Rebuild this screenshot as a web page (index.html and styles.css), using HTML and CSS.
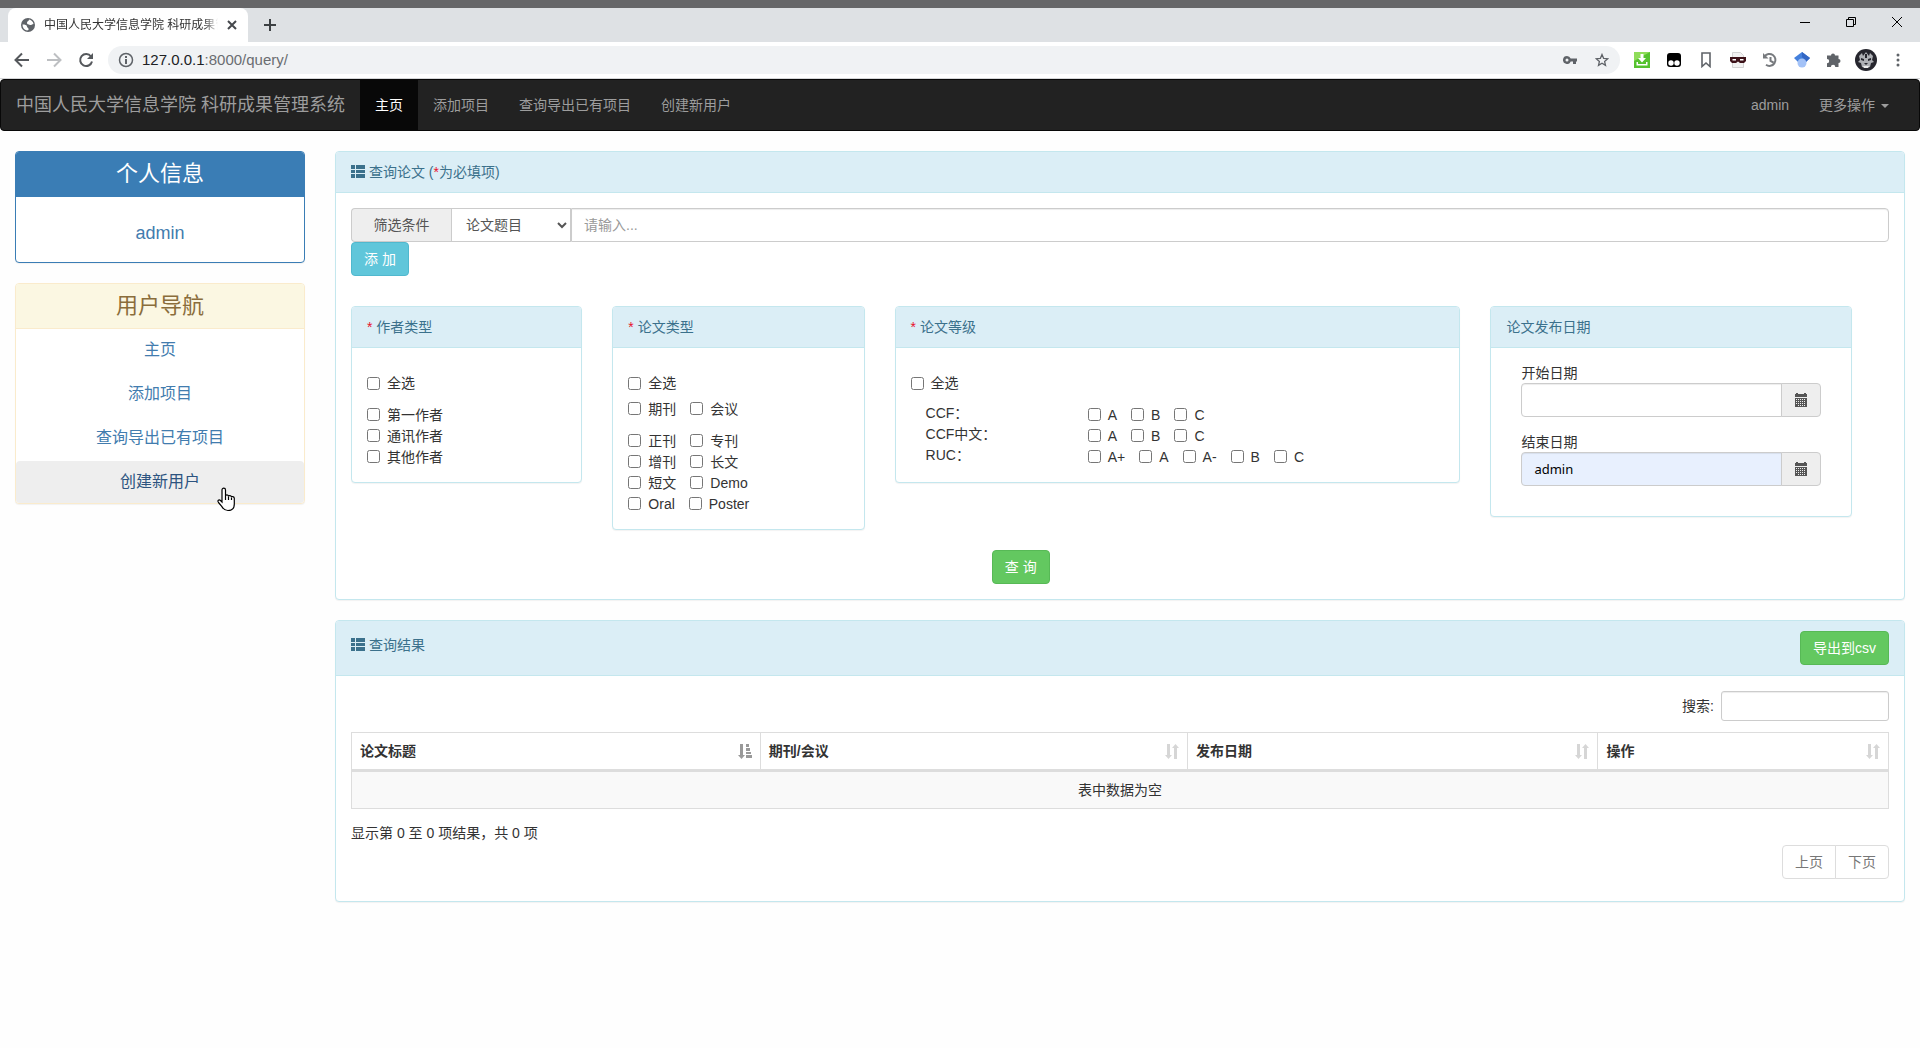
FILE: index.html
```html
<!DOCTYPE html>
<html lang="zh-CN">
<head>
<meta charset="utf-8">
<meta name="viewport" content="width=device-width, initial-scale=1">
<title>中国人民大学信息学院 科研成果管理系统</title>
<link rel="stylesheet" href="styles.css">
</head>
<body>
<svg class="sprite" aria-hidden="true">
  <symbol id="i-list" viewBox="0 0 14 13"><path d="M0 0h4v4H0zM5 0h9v4H5zM0 5h4v3H0zM5 5h9v3H5zM0 9h4v4H0zM5 9h9v4H5z"/></symbol>
  <symbol id="i-cal" viewBox="0 0 14 14"><path fill-rule="evenodd" d="M1 1h1V0h2v1h6V0h2v1h1v3H1zM1 5h12v9H1zM2 6v1h1V6zM4 6v1h1V6zM6 6v1h1V6zM8 6v1h1V6zM10 6v1h1V6zM2 8v1h1V8zM4 8v1h1V8zM6 8v1h1V8zM8 8v1h1V8zM10 8v1h1V8zM2 10v1h1v-1zM4 10v1h1v-1zM6 10v1h1v-1zM8 10v1h1v-1zM10 10v1h1v-1zM4 12v1h1v-1zM6 12v1h1v-1zM8 12v1h1v-1zM10 12v1h1v-1z"/></symbol>
  <symbol id="i-sort" viewBox="0 0 14 15"><path d="M2 0h3v11h2l-3.500 4L0 11h2zM9 15h3V4h2L10.500 0 7 4h2z"/></symbol>
  <symbol id="i-sort-asc" viewBox="0 0 14 15"><path d="M2 0h3v11h2l-3.500 4L0 11h2zM8 0h3v3H8zM8 4h4v3H8zM8 8h5v2H8zM8 11h6v3H8z"/></symbol>
</svg>

<header class="browser">
  <div class="desktop-strip"></div>
  <div class="tabs">
    <div class="tab">
      <svg width="14" height="14" viewBox="0 0 14 14"><circle cx="7" cy="7" r="7" fill="#5f6368"/><path d="M1.500 6.500c2.500 0 4.500.5 4.500 2s2 1 1.500 3.500l-1.500.5C3 12 1.500 9.500 1.500 6.500zM8 1.500c2 .5 4.200 2 4.500 4.500-1.500 0-2 1.500-3.500 1C7.500 6.500 5.500 6 6 4.500S8 3 8 1.500z" fill="#fff"/></svg>
      <span class="tab-title">中国人民大学信息学院 科研成果管理系统</span>
      <button class="plain" aria-label="关闭标签页"><svg width="10" height="10" viewBox="0 0 10 10"><path d="M1 1l8 8M9 1L1 9" stroke="#45484c" stroke-width="2"/></svg></button>
    </div>
    <button class="plain new-tab" aria-label="新标签页"><svg width="12" height="12" viewBox="0 0 12 12"><path d="M6 0v12M0 6h12" stroke="#3c4043" stroke-width="2"/></svg></button>
    <div class="window-controls">
      <button class="plain" aria-label="最小化"><svg width="10" height="10" viewBox="0 0 10 10"><path d="M0 5.500h10" stroke="#000"/></svg></button>
      <button class="plain" aria-label="还原"><svg width="10" height="10" viewBox="0 0 10 10" fill="none" stroke="#000"><path d="M.5 2.500h7v7h-7zM2.500 2.500v-2h7v7h-2"/></svg></button>
      <button class="plain" aria-label="关闭"><svg width="10" height="10" viewBox="0 0 10 10"><path d="M0 0l10 10M10 0L0 10" stroke="#000"/></svg></button>
    </div>
  </div>
  <div class="toolbar">
    <button class="plain tool" aria-label="后退"><svg width="16" height="16" viewBox="0 0 16 16" fill="none" stroke="#55585c" stroke-width="2"><path d="M15 8H2M8 1.500L1.500 8 8 14.500"/></svg></button>
    <button class="plain tool" aria-label="前进"><svg width="16" height="16" viewBox="0 0 16 16" fill="none" stroke="#bdbfc2" stroke-width="2"><path d="M1 8h13M8 1.500L14.500 8 8 14.500"/></svg></button>
    <button class="plain tool" aria-label="重新加载"><svg width="16" height="16" viewBox="0 0 16 16"><path d="M13 4.500A6 6 0 1 0 14 9.500" fill="none" stroke="#55585c" stroke-width="2"/><path d="M15 1v6H9z" fill="#55585c"/></svg></button>
    <div class="omnibox">
      <svg width="16" height="16" viewBox="0 0 16 16"><circle cx="8" cy="8" r="6.500" fill="none" stroke="#5f6368" stroke-width="1.500"/><path d="M7 7h2v5H7zM7 4h2v2H7z" fill="#5f6368"/></svg>
      <span class="url">127.0.0.1<span class="url-rest">:8000/query/</span></span>
      <button class="plain tool" aria-label="密码"><svg width="14" height="8" viewBox="0 0 14 8"><path fill-rule="evenodd" fill="#5f6368" d="M4 0a4 4 0 1 0 3.700 5.500H10V8h3V5.500h1v-3H7.700A4 4 0 0 0 4 0zM4 2.500a1.500 1.500 0 1 1 0 3 1.500 1.500 0 0 1 0-3z"/></svg></button>
      <button class="plain tool" aria-label="收藏"><svg width="14" height="14" viewBox="0 0 14 14"><path d="M7 1.500l1.600 3.800 4.100.4-3.100 2.700.9 4L7 10.300l-3.500 2.100.9-4-3.100-2.700 4.100-.4z" fill="none" stroke="#5f6368" stroke-width="1.300"/></svg></button>
    </div>
    <div class="extensions">
      <button class="plain tool" aria-label="下载"><svg width="16" height="16" viewBox="0 0 16 16"><rect width="16" height="16" fill="#55c22f"/><path d="M0 0h16L0 9z" fill="#8fdc5a"/><path d="M6.500 2h3v4H12L8 10.500 4 6h2.500zM2.500 10H4v2h8v-2h1.500v3.500h-11z" fill="#fff"/></svg></button>
      <button class="plain tool" aria-label="脚本管理"><svg width="14" height="14" viewBox="0 0 14 14"><rect width="14" height="14" rx="3" fill="#000"/><circle cx="4" cy="10" r="2.700" fill="#fff"/><circle cx="10" cy="10" r="2.700" fill="#fff"/></svg></button>
      <button class="plain tool" aria-label="书签"><svg width="10" height="16" viewBox="0 0 10 16"><path d="M1 1h8v13.500L5 11l-4 3.500z" fill="none" stroke="#5f6368" stroke-width="1.600"/></svg></button>
      <button class="plain tool" aria-label="面具"><svg width="16" height="16" viewBox="0 0 16 16"><path d="M2.500.5h8l3 3v12h-11z" fill="#f2f2f2" stroke="#d4d4d4"/><path d="M0 5h16v4l-2 2h-4L8 9.500 6 11H2L0 9z" fill="#3d1219"/><path d="M2.500 7h3.500v1.500H2.500zM10 7h3.500v1.500H10z" fill="#fff"/></svg></button>
      <button class="plain tool" aria-label="历史"><svg width="16" height="16" viewBox="0 0 16 16" fill="none" stroke="#777a7e" stroke-width="2"><path d="M2.500 4.500A6 6 0 1 1 4 12.800M8.500 5v4l3 1.500"/><path d="M1 1v5.500h5.500z" fill="#777a7e" stroke="none"/></svg></button>
      <button class="plain tool" aria-label="学术"><svg width="16" height="16" viewBox="0 0 16 16"><path d="M8 0l8 6-4 4H4L0 6z" fill="#4480dc"/><path d="M8 0l8 6-4 4-4-5z" fill="#3367c4"/><circle cx="8" cy="11" r="4.500" fill="#a3c2f7"/></svg></button>
      <button class="plain tool" aria-label="扩展程序"><svg width="16" height="16" viewBox="0 0 16 16"><path d="M5 3.500a2 2 0 0 1 4 0h3.500V7a2 2 0 0 1 0 4v4H9.300a2.200 2.200 0 0 0-4.400 0H1v-3.700a2.200 2.200 0 0 0 0-4.400V3.500z" fill="#5f6368"/></svg></button>
      <button class="plain tool" aria-label="用户"><svg width="22" height="22" viewBox="0 0 22 22"><circle cx="11" cy="11" r="11" fill="#26262e"/><path d="M4 7l3-3 1 3 3-4 3 4 1-3 3 3-1 4 2 2-3 1-1 4-4 1-4-1-1-4-3-1 2-2z" fill="#aeb0b5"/><path d="M6 9l3 1v2L6 11zM16 9l-3 1v2l3-1zM9 14h4l-2 2zM10 5h2v4h-2z" fill="#26262e"/><path d="M8 17h6l-1 2H9z" fill="#eee"/></svg></button>
      <button class="plain tool" aria-label="菜单"><svg width="4" height="14" viewBox="0 0 4 14" fill="#5f6368"><circle cx="2" cy="2" r="1.500"/><circle cx="2" cy="7" r="1.500"/><circle cx="2" cy="12" r="1.500"/></svg></button>
    </div>
  </div>
</header>

<nav class="navbar">
  <a class="brand" href="#">中国人民大学信息学院 科研成果管理系统</a>
  <a class="nav-link active" href="#">主页</a>
  <a class="nav-link" href="#">添加项目</a>
  <a class="nav-link" href="#">查询导出已有项目</a>
  <a class="nav-link" href="#">创建新用户</a>
  <div class="nav-right">
    <a class="nav-link" href="#">admin</a>
    <a class="nav-link" href="#">更多操作 <span class="caret"></span></a>
  </div>
</nav>

<div class="layout">
  <aside class="sidebar">
    <section class="panel primary">
      <h2 class="side-heading">个人信息</h2>
      <div class="profile"><a href="#">admin</a></div>
    </section>
    <section class="panel warning">
      <h2 class="side-heading">用户导航</h2>
      <div class="side-nav">
        <a href="#">主页</a>
        <a href="#">添加项目</a>
        <a href="#">查询导出已有项目</a>
        <a class="hovered" href="#">创建新用户
          <svg class="cursor" width="19" height="25" viewBox="0 0 19 25"><path d="M5 15V3c0-2.500 3.500-2.500 3.500 0v6c0-1.500 3-1.500 3 .5 0-1.500 3-1.200 3 .8 0-1.300 2.800-1 2.800 1V17c0 4-2 6.500-6.300 6.500-4 0-5-2-6.500-4.500L1.500 15.500c-1.500-2 .5-3.500 2-2z" fill="#fff" stroke="#000" stroke-width="1.200"/><path d="M8.500 9v4M11.500 9.500V13M14.500 10.500V13" stroke="#000" stroke-width="1.200"/></svg>
        </a>
      </div>
    </section>
  </aside>

  <main class="content">
    <section class="panel info">
      <h3 class="heading"><svg class="list-icon" width="14" height="13"><use href="#i-list"/></svg> 查询论文 (<span class="req">*</span>为必填项)</h3>
      <form class="body" onsubmit="return false">
        <div class="filter">
          <label class="addon filter-label" for="field">筛选条件</label>
          <select class="control filter-field" id="field"><option>论文题目</option></select>
          <input class="control filter-text" type="text" placeholder="请输入..." aria-label="筛选内容">
        </div>
        <button class="btn btn-info" type="button">添 加</button>

        <div class="cards">
          <div class="card-col author-col">
            <section class="panel info">
              <h3 class="heading"><span class="req">*</span> 作者类型</h3>
              <div class="card-body">
                <div class="checks all"><label><input type="checkbox">全选</label></div>
                <div class="group spaced">
                  <div class="checks"><label><input type="checkbox">第一作者</label></div>
                  <div class="checks"><label><input type="checkbox">通讯作者</label></div>
                  <div class="checks"><label><input type="checkbox">其他作者</label></div>
                </div>
              </div>
            </section>
          </div>
          <div class="card-col paper-col">
            <section class="panel info">
              <h3 class="heading"><span class="req">*</span> 论文类型</h3>
              <div class="card-body">
                <div class="checks all"><label><input type="checkbox">全选</label></div>
                <div class="group near">
                  <div class="checks"><label><input type="checkbox">期刊</label><label><input type="checkbox">会议</label></div>
                </div>
                <div class="group spaced">
                  <div class="checks"><label><input type="checkbox">正刊</label><label><input type="checkbox">专刊</label></div>
                  <div class="checks"><label><input type="checkbox">增刊</label><label><input type="checkbox">长文</label></div>
                  <div class="checks"><label><input type="checkbox">短文</label><label><input type="checkbox">Demo</label></div>
                  <div class="checks"><label><input type="checkbox">Oral</label><label><input type="checkbox">Poster</label></div>
                </div>
              </div>
            </section>
          </div>
          <div class="card-col level-col">
            <section class="panel info">
              <h3 class="heading"><span class="req">*</span> 论文等级</h3>
              <div class="card-body">
                <div class="checks all"><label><input type="checkbox">全选</label></div>
                <div class="group spaced levels">
                  <span class="level-name">CCF：</span>
                  <div class="checks"><label><input type="checkbox">A</label><label><input type="checkbox">B</label><label><input type="checkbox">C</label></div>
                  <span class="level-name">CCF中文：</span>
                  <div class="checks"><label><input type="checkbox">A</label><label><input type="checkbox">B</label><label><input type="checkbox">C</label></div>
                  <span class="level-name">RUC：</span>
                  <div class="checks"><label><input type="checkbox">A+</label><label><input type="checkbox">A</label><label><input type="checkbox">A-</label><label><input type="checkbox">B</label><label><input type="checkbox">C</label></div>
                </div>
              </div>
            </section>
          </div>
          <div class="card-col date-col">
            <section class="panel info">
              <h3 class="heading">论文发布日期</h3>
              <div class="dates">
                <div>
                  <label for="start">开始日期</label>
                  <div class="date-input"><input class="control" id="start" type="text"><span class="addon"><svg width="14" height="14"><use href="#i-cal"/></svg></span></div>
                </div>
                <div>
                  <label for="end">结束日期</label>
                  <div class="date-input"><input class="control autofilled" id="end" type="text" value="admin"><span class="addon"><svg width="14" height="14"><use href="#i-cal"/></svg></span></div>
                </div>
              </div>
            </section>
          </div>
        </div>
        <button class="btn btn-success query" type="submit">查 询</button>
      </form>
    </section>

    <section class="panel info">
      <div class="heading result-heading">
        <h3><svg class="list-icon" width="14" height="13"><use href="#i-list"/></svg> 查询结果</h3>
        <button class="btn btn-success" type="button">导出到csv</button>
      </div>
      <div class="body results">
        <label class="search">搜索: <input class="control" type="search"></label>
        <table class="table">
          <colgroup><col class="c-title"><col class="c-venue"><col class="c-date"><col class="c-op"></colgroup>
          <thead>
            <tr>
              <th><div>论文标题<svg class="sorted" width="14" height="15"><use href="#i-sort-asc"/></svg></div></th>
              <th><div>期刊/会议<svg width="14" height="15"><use href="#i-sort"/></svg></div></th>
              <th><div>发布日期<svg width="14" height="15"><use href="#i-sort"/></svg></div></th>
              <th><div>操作<svg width="14" height="15"><use href="#i-sort"/></svg></div></th>
            </tr>
          </thead>
          <tbody><tr><td colspan="4">表中数据为空</td></tr></tbody>
        </table>
        <p class="table-info">显示第 0 至 0 项结果，共 0 项</p>
        <div class="pager"><a href="#">上页</a><a href="#">下页</a></div>
      </div>
    </section>
  </main>
</div>
</body>
</html>
```
FILE: styles.css
```css
* { box-sizing: border-box; }

body {
  margin: 0;
  background: #fefefe;
  color: #333;
  font: 14px/20px "Liberation Sans", "Noto Sans CJK SC", sans-serif;
}

a { color: #427cae; text-decoration: none; }
h2, h3, p { margin: 0; font-weight: 400; }
input, select, button { font: inherit; color: inherit; }
svg { flex: none; }
.content svg { fill: currentColor; }
.sprite { display: none; }

/* Browser frame */
.browser { border-bottom: 1px solid #d5d6d8; }
.desktop-strip { height: 8px; background: #666668; }
.plain {
  display: flex;
  align-items: center;
  justify-content: center;
  padding: 0;
  border: 0;
  background: none;
}
.tabs { display: flex; height: 34px; padding-left: 8px; background: #dee1e4; }
.tab {
  display: flex;
  align-items: center;
  gap: 9px;
  width: 240px;
  padding: 0 11px 0 13px;
  border-radius: 8px 8px 0 0;
  background: #fff;
}
.tab-title {
  flex: 1;
  overflow: hidden;
  white-space: nowrap;
  font-size: 12px;
  -webkit-mask-image: linear-gradient(to right, #000 92%, transparent);
  mask-image: linear-gradient(to right, #000 92%, transparent);
}
.new-tab { width: 44px; }
.window-controls { display: flex; height: 28px; margin-left: auto; }
.window-controls .plain { width: 46px; }
.toolbar { display: flex; align-items: center; height: 36px; padding: 0 6px; background: #fff; }
.tool { width: 32px; height: 28px; }
.omnibox {
  display: flex;
  flex: 1;
  align-items: center;
  height: 28px;
  margin-left: 6px;
  padding: 0 2px 0 10px;
  border-radius: 14px;
  background: #f0f2f4;
}
.url { flex: 1; margin-left: 8px; color: #202124; font-size: 15px; }
.url-rest { color: #6a6d71; }
.extensions { display: flex; margin-left: 6px; }

/* Site navigation */
.navbar {
  display: flex;
  height: 52px;
  margin-bottom: 20px;
  border: 1px solid #080808;
  border-radius: 4px;
  background: #222;
}
.brand, .nav-link { padding: 15px; color: #9d9d9d; }
.brand { font-size: 18px; }
.active { background: #080808; color: #fff; }
.nav-right { display: flex; margin: 0 15px 0 auto; }
.caret {
  display: inline-block;
  margin-left: 2px;
  border: 4px solid transparent;
  border-top-color: currentColor;
  border-bottom: 0;
  vertical-align: middle;
}

/* Page columns */
.layout { display: grid; grid-template-columns: 2fr 10fr; }
.sidebar, .content { min-width: 0; padding: 0 15px; }

.panel {
  margin-bottom: 20px;
  border: 1px solid;
  border-radius: 4px;
  background: #fff;
  box-shadow: 0 1px 1px rgba(0, 0, 0, .05);
}
.primary { border-color: #3a7db5; }
.warning { border-color: #faebcc; }
.info { border-color: #c4e7ee; }

.side-heading {
  height: 45px;
  padding: 10px 0;
  border-bottom: 1px solid #faebcc;
  border-radius: 3px 3px 0 0;
  background: #fbf7e2;
  color: #8a6d3b;
  font-size: 22px;
  line-height: 24px;
  text-align: center;
}
.primary .side-heading { border-color: #3a7db5; background: #3a7db5; color: #fff; }
.profile { padding: 26px 0 19px; font-size: 18px; text-align: center; }
.side-nav { display: grid; gap: 2px; font-size: 16px; text-align: center; }
.side-nav a { position: relative; padding: 11px 0; border-radius: 4px; }
.side-nav .hovered { background: #eee; color: #2d5480; }
.cursor { position: absolute; top: 26px; left: 201px; }

.heading {
  padding: 10px 15px;
  border-bottom: 1px solid #c4e7ee;
  border-radius: 3px 3px 0 0;
  background: #dbeef6;
  color: #3b718c;
  font-size: 14px;
  line-height: 20px;
}
.list-icon { vertical-align: -1px; }
.req { color: #e8122c; }
.body { padding: 15px; }

/* Form controls */
.control {
  height: 34px;
  min-width: 0;
  padding: 6px 12px;
  border: 1px solid #ccc;
  border-radius: 4px;
  background: #fff;
  color: #555;
  box-shadow: inset 0 1px 1px rgba(0, 0, 0, .075);
}
.control::placeholder { color: #999; }
.addon {
  display: flex;
  align-items: center;
  justify-content: center;
  height: 34px;
  border: 1px solid #ccc;
  border-radius: 4px;
  background: #eee;
  color: #555;
}
.filter { display: flex; }
.filter-label { width: 100px; border-right: 0; border-radius: 4px 0 0 4px; }
.filter-field { width: 120px; padding: 0 1px 0 10px; border-radius: 0; box-shadow: none; }
.filter-text { flex: 1; border-left-width: 1px; border-radius: 0 4px 4px 0; }

.btn {
  display: block;
  height: 34px;
  padding: 0 12px;
  border: 1px solid;
  border-radius: 4px;
  color: #fff;
}
.btn-info { border-color: #50b8ce; background: #60c6da; }
.btn-success { border-color: #57b956; background: #63c860; }

/* Filter cards */
.cards { display: flex; align-items: flex-start; margin: 30px -15px 0; }
.card-col { padding: 0 15px; }
.author-col { width: 16.6667%; }
.paper-col { width: 18%; }
.level-col { width: 38%; }
.date-col { width: 25%; }
.card-body { padding: 25px 15px 15px; }
.checks { display: flex; gap: 14px; height: 21px; white-space: nowrap; }
.checks label { display: flex; align-items: center; gap: 7px; }
.checks input { width: 13px; height: 13px; margin: 0; }
.all { height: 20px; }
.near { margin-top: 5px; }
.spaced { margin-top: 11px; }
.levels { display: grid; grid-template-columns: 5fr 11fr; padding-left: 15px; }
.level-name { line-height: 18px; }
.dates { display: grid; gap: 15px; padding: 15px 30px 30px; }
.dates label { display: block; }
.date-input { display: flex; }
.date-input .control { flex: 1; border-radius: 4px 0 0 4px; }
.date-input .addon { width: 40px; margin-left: -1px; border-radius: 0 4px 4px 0; }
.date-input .autofilled { background: #e8f0fe; color: #000; font: 13px/20px "Noto Sans", sans-serif; }
.query { margin-left: 41.6667%; }

/* Results */
.result-heading { display: flex; justify-content: space-between; }
.result-heading h3 { font-size: 14px; padding-top: 4px; }
.results { padding-bottom: 22px; }
.search { display: flex; align-items: center; justify-content: flex-end; gap: 7px; }
.search .control { width: 168px; height: 30px; padding: 5px 10px; border-radius: 3px; }
.table {
  width: 100%;
  margin-top: 11px;
  border: 1px solid #ddd;
  border-left: 0;
  border-spacing: 0;
  table-layout: fixed;
}
.c-title { width: 26.6%; }
.c-venue { width: 27.8%; }
.c-date { width: 26.7%; }
.table th, .table td { padding: 8px; border-left: 1px solid #ddd; }
.table th { border-bottom: 3px solid #ddd; text-align: left; }
.table th div { display: flex; align-items: center; justify-content: space-between; }
.table th svg { color: #d6d6d6; }
.table th .sorted { color: #999; }
.table td { background: #f9f9f9; text-align: center; }
.table-info { margin-top: 14px; }
.pager { display: flex; justify-content: flex-end; margin-top: 2px; }
.pager a { padding: 6px 12px; border: 1px solid #ddd; background: #fff; color: #777; }
.pager a:first-child { border-radius: 4px 0 0 4px; }
.pager a:last-child { margin-left: -1px; border-radius: 0 4px 4px 0; }
```
